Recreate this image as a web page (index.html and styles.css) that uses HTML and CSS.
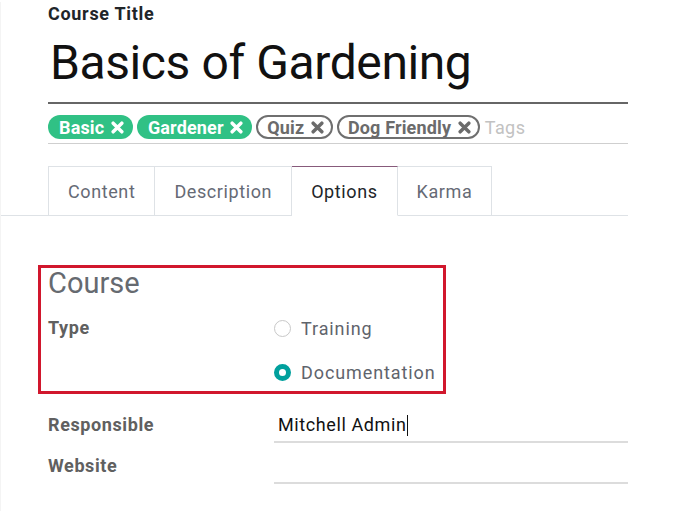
FILE: index.html
```html
<!DOCTYPE html>
<html lang="en">
<head>
<meta charset="utf-8">
<title>Basics of Gardening</title>
<link rel="stylesheet" href="styles.css">
</head>
<body>
<div class="page">
  <div class="sheet">
    <div class="title-label">Course Title</div>
    <h1 class="title">Basics of Gardening</h1>
    <div class="tags">
      <span class="tag tag-green">Basic <svg class="x" viewBox="0 0 12 12"><path d="M2 2L10 10M10 2L2 10"/></svg></span>
      <span class="tag tag-green">Gardener <svg class="x" viewBox="0 0 12 12"><path d="M2 2L10 10M10 2L2 10"/></svg></span>
      <span class="tag tag-outline">Quiz <svg class="x" viewBox="0 0 12 12"><path d="M2 2L10 10M10 2L2 10"/></svg></span>
      <span class="tag tag-outline">Dog Friendly <svg class="x" viewBox="0 0 12 12"><path d="M2 2L10 10M10 2L2 10"/></svg></span>
      <span class="tags-placeholder">Tags</span>
    </div>
  </div>

  <div class="tabs">
    <div class="tab">Content</div>
    <div class="tab">Description</div>
    <div class="tab tab-active">Options</div>
    <div class="tab">Karma</div>
  </div>

  <div class="sheet">
    <div class="highlight">
      <div class="group-title">Course</div>
      <div class="row">
        <div class="label">Type</div>
        <div class="radios">
          <div class="radio-item"><span class="radio"></span><span class="radio-text">Training</span></div>
          <div class="radio-item"><span class="radio radio-checked"></span><span class="radio-text">Documentation</span></div>
        </div>
      </div>
    </div>

    <div class="fields">
      <div class="row field-row">
        <div class="label">Responsible</div>
        <div class="input"><span class="input-text">Mitchell Admin</span><span class="caret"></span></div>
      </div>
      <div class="row field-row">
        <div class="label">Website</div>
        <div class="input"></div>
      </div>
    </div>
  </div>
</div>
</body>
</html>
```

FILE: styles.css
```css
* { box-sizing: border-box; }
html, body { margin: 0; padding: 0; background: #fff; }
body {
  font-family: Roboto, "Liberation Sans", sans-serif;
  color: #212529;
  width: 700px;
  height: 511px;
  overflow: hidden;
}
.page {
  min-height: 511px;
  border-left: 1px solid #f4f4f4;
}
.sheet {
  padding-left: 47px;
  width: 627px;
}
.title-label {
  font-size: 18px;
  font-weight: 700;
  letter-spacing: 0.7px;
  line-height: 24px;
  margin-top: 2px;
  color: #212529;
}
.title {
  margin: 9px 0 0 0;
  font-size: 48px;
  font-weight: 400;
  letter-spacing: -0.4px;
  line-height: 56px;
  padding-left: 2px;
  padding-bottom: 11px;
  border-bottom: 2px solid #666;
  color: #111;
}
.tags {
  display: flex;
  align-items: center;
  gap: 4px;
  padding-top: 11px;
  padding-bottom: 4px;
  border-bottom: 1px solid #cfcfcf;
}
.tag {
  display: inline-flex;
  align-items: center;
  height: 24px;
  border-radius: 12px;
  padding: 0 9px 0 11px;
  font-size: 18px;
  font-weight: 700;
  letter-spacing: 0.15px;
  white-space: pre;
}
.tag-green {
  background: #30c185;
  color: #fff;
  stroke: #fff;
}
.tag-outline {
  border: 2px solid #6f6f6f;
  color: #6b6b6b;
  stroke: #6b6b6b;
  padding: 0 7px 0 9px;
}
.x {
  width: 13px;
  height: 13px;
  margin-left: 2px;
  fill: none;
  stroke-width: 3.2;
  stroke-linecap: round;
}
.tags-placeholder {
  font-size: 18px;
  color: #c2c2c2;
  letter-spacing: 0.4px;
  margin-left: 1px;
}

.tabs {
  display: flex;
  margin-top: 22px;
  padding-left: 47px;
  width: 627px;
  border-bottom: 1px solid #dee2e6;
}
.tab {
  height: 50px;
  margin-bottom: -1px;
  padding: 0 19px;
  display: flex;
  align-items: center;
  font-size: 18px;
  letter-spacing: 0.6px;
  color: #666a75;
  border: 1px solid #dee2e6;
  border-left-width: 0;
  border-bottom-color: #dee2e6;
}
.tab:first-child { border-left-width: 1px; }
.tab-active {
  color: #212529;
  border-top-color: #875a7b;
  border-bottom-color: #fff;
}

.highlight {
  margin-top: 49px;
  margin-left: -10px;
  width: 408px;
  border: 3px solid #d1172d;
  padding: 1px 0 5px 7px;
}
.group-title {
  font-size: 29px;
  line-height: 29px;
  color: #666a70;
}
.row {
  display: grid;
  grid-template-columns: 226px 1fr;
  align-items: start;
}
.label {
  font-size: 18px;
  font-weight: 700;
  letter-spacing: 0.6px;
  line-height: 28px;
  color: #606060;
}
.highlight .row { margin-top: 16px; }
.radios {
  display: flex;
  flex-direction: column;
  gap: 16px;
}
.radio-item {
  display: flex;
  align-items: center;
  height: 28px;
  gap: 10px;
}
.radio {
  width: 17px;
  height: 17px;
  border-radius: 50%;
  border: 1px solid #c8c8c8;
  background: #fff;
  flex: none;
}
.radio-checked {
  border: 5.5px solid #01a09d;
  background: #fff;
}
.radio-text {
  font-size: 18px;
  letter-spacing: 0.9px;
  color: #5f646c;
}

.fields { margin-top: 17px; }
.field-row + .field-row { margin-top: 9px; }
.input {
  height: 32px;
  border-bottom: 2px solid #dcdcdc;
  padding: 0 0 2px 4px;
  display: flex;
  align-items: center;
}
.input-text {
  font-size: 18px;
  letter-spacing: 0.6px;
  color: #111;
  line-height: 28px;
}
.caret {
  width: 1px;
  height: 21px;
  background: #111;
  margin-left: 1px;
}
```
